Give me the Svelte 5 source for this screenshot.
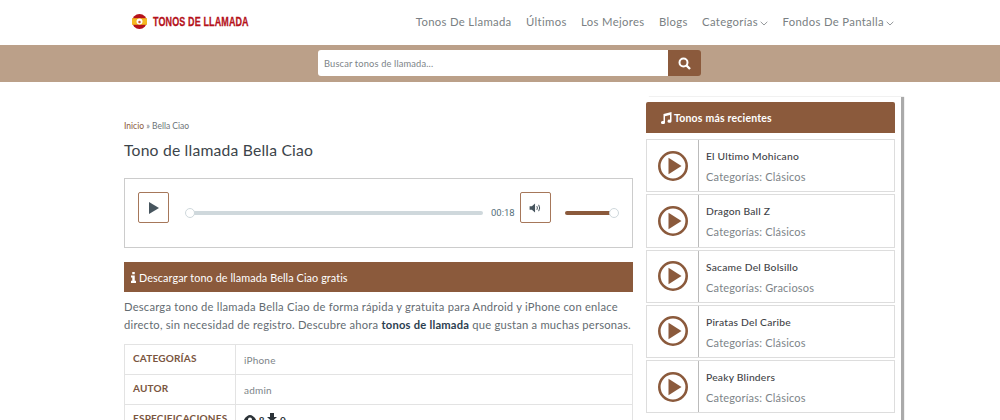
<script lang="ts">
  const links = ['Tonos De Llamada', 'Últimos', 'Los Mejores', 'Blogs'];
  const recent = [
    { title: 'El Ultimo Mohicano', cat: 'Clásicos' },
    { title: 'Dragon Ball Z', cat: 'Clásicos' },
    { title: 'Sacame Del Bolsillo', cat: 'Graciosos' },
    { title: 'Piratas Del Caribe', cat: 'Clásicos' },
    { title: 'Peaky Blinders', cat: 'Clásicos' },
  ];
</script>

<header class="nav">
  <a class="logo" href="#top">
    <svg width="15" height="15" viewBox="0 0 16 16">
      <circle cx="8" cy="8" r="8" fill="#b5121b" />
      <rect x="0" y="4.500" width="16" height="7" fill="#f5b921" />
      <circle cx="8" cy="8" r="3.200" fill="#fff" />
      <circle cx="8" cy="8.500" r="1.300" fill="#c8533a" />
    </svg>
    <span>TONOS DE LLAMADA</span>
  </a>
  <nav>
    {#each links as l}<a href="#top">{l}</a>{/each}
    <a href="#top">Categorías<svg class="caret" width="8" height="5" viewBox="0 0 8 5"><path d="M.7.8 4 4 7.3.8" fill="none" stroke="currentColor" stroke-width=".8" /></svg></a>
    <a href="#top">Fondos De Pantalla<svg class="caret" width="8" height="5" viewBox="0 0 8 5"><path d="M.7.8 4 4 7.3.8" fill="none" stroke="currentColor" stroke-width=".8" /></svg></a>
  </nav>
</header>

<div class="band">
  <form class="search">
    <input placeholder="Buscar tonos de llamada..." />
    <button type="button" aria-label="Buscar">
      <svg width="13" height="13" viewBox="0 0 13 13"><circle cx="5.500" cy="5.500" r="4" fill="none" stroke="#fff" stroke-width="2" /><path d="M8.500 8.500 12 12" stroke="#fff" stroke-width="2.400" /></svg>
    </button>
  </form>
</div>

<div class="page">
  <main>
    <p class="crumbs"><a href="#top">Inicio</a> » Bella Ciao</p>
    <h1>Tono de llamada Bella Ciao</h1>

    <div class="player">
      <button class="ctl" type="button" aria-label="Play">
        <svg width="10" height="12" viewBox="0 0 11 13"><path d="M0 0 11 6.500 0 13z" fill="#47555e" /></svg>
      </button>
      <div class="track"><i class="knob start"></i></div>
      <span class="time">00:18</span>
      <button class="ctl" type="button" aria-label="Volumen">
        <svg width="13" height="10" viewBox="0 0 13 11"><path d="M0 3.500h2.500L6 .5v10L2.500 7.500H0z" fill="#47555e" /><path d="M8 3.500q1.200 2 0 4M10 2q2.200 3.500 0 7" fill="none" stroke="#47555e" stroke-width="1.100" /></svg>
      </button>
      <div class="vol"><i class="knob end"></i></div>
    </div>

    <h2 class="bar">
      <svg width="5" height="11" viewBox="0 0 6 13"><path d="M1.500 0h3v2.600h-3zM0 4h4.500v6.500H6V13H0v-2.500h1.500V6.500H0z" fill="#fff" /></svg>
      Descargar tono de llamada Bella Ciao gratis
    </h2>

    <p class="intro">
      Descarga tono de llamada Bella Ciao de forma rápida y gratuita para Android y iPhone con enlace<br />
      directo, sin necesidad de registro. Descubre ahora <a href="#top">tonos de llamada</a> que gustan a muchas personas.
    </p>

    <table>
      <tbody>
        <tr><th>CATEGORÍAS</th><td>iPhone</td></tr>
        <tr><th>AUTOR</th><td>admin</td></tr>
        <tr>
          <th>ESPECIFICACIONES</th>
          <td class="stats">
            <svg width="12" height="9" viewBox="0 0 12 9"><path d="M0 4.500Q3 0 6 0t6 4.500Q9 9 6 9T0 4.500z" fill="#2c3338" /><circle cx="6" cy="4.500" r="2" fill="#fff" /></svg>
            8
            <svg width="10" height="11" viewBox="0 0 10 11"><path d="M3 0h4v4h3L5 8.500 0 4h3zM0 9.500h10V11H0z" fill="#2c3338" /></svg>
            0
          </td>
        </tr>
      </tbody>
    </table>
  </main>

  <aside>
    <h3 class="side-head">
      <svg width="12" height="12" viewBox="0 0 12 12"><path d="M3.500 2 11.500 0v9.200a2 1.600 0 1 1-1.500-1.500V3L5 4.200v6.300a2 1.600 0 1 1-1.500-1.500z" fill="#fff" /></svg>
      Tonos más recientes
    </h3>
    <ul>
      {#each recent as r}
        <li>
          <div class="thumb">
            <svg width="30" height="30" viewBox="0 0 30 30"><circle cx="15" cy="15" r="13.700" fill="none" stroke="#8b5a3c" stroke-width="2.600" /><path d="M10.500 6.800 23.500 15l-13 8.200z" fill="#8b5a3c" /></svg>
          </div>
          <div class="info">
            <a href="#top">{r.title}</a>
            <span>Categorías: {r.cat}</span>
          </div>
        </li>
      {/each}
    </ul>
  </aside>
</div>

<style>
  :global(body) {
    font-family: Lato, "Open Sans", sans-serif;
    color: #5f6a72;
    background: #fff;
    overflow: hidden;
    height: 420px;
  }

  a {
    color: inherit;
    text-decoration: none;
  }

  .nav {
    height: 45px;
    display: flex;
    align-items: center;
    justify-content: space-between;
    padding: 0 106px 3px 132px;
    box-sizing: border-box;
  }

  .logo {
    display: flex;
    align-items: center;
    gap: 6px;
    color: #b5121b;
    font-family: "Liberation Sans", sans-serif;
    font-weight: 700;
    font-size: 13px;
    letter-spacing: 0.2px;
  }

  .logo span {
    display: inline-block;
    transform: scaleX(0.69);
    transform-origin: left center;
    -webkit-text-stroke: 0.3px #b5121b;
  }

  nav {
    display: flex;
    gap: 14.500px;
    font-size: 11.300px;
    letter-spacing: 0.33px;
    color: #7a7f83;
  }

  .caret {
    margin-left: 2px;
  }

  .band {
    height: 37px;
    box-sizing: border-box;
    background: #bba089;
    display: flex;
    align-items: flex-start;
    padding: 5px 0 0 318px;
  }

  .search {
    display: flex;
    height: 26px;
    width: 383px;
  }

  .search input {
    flex: 1;
    min-width: 0;
    border: 0;
    padding: 0 6px;
    border-radius: 3px 0 0 3px;
    font: 9.300px Lato, sans-serif;
    letter-spacing: 0.15px;
  }

  .search input::placeholder {
    color: #7d8488;
  }

  .search button {
    width: 33px;
    border: 0;
    padding: 0;
    background: #8b5a3c;
    border-radius: 0 3px 3px 0;
    display: flex;
    align-items: center;
    justify-content: center;
  }

  .page {
    display: grid;
    grid-template-columns: 509px 255px;
    gap: 13px;
    padding: 15px 0 0 124px;
  }

  main {
    padding-top: 24px;
  }

  .crumbs {
    margin: 0;
    font-size: 8.500px;
    line-height: 10px;
    color: #6d7478;
  }

  .crumbs a {
    color: #8b5a3c;
  }

  h1 {
    margin: 9px 0 18px;
    font-size: 15.700px;
    line-height: 20px;
    font-weight: 400;
    color: #3c444a;
    letter-spacing: 0.2px;
  }

  .player {
    height: 70px;
    box-sizing: border-box;
    border: 1px solid #ccc;
    display: flex;
    align-items: flex-start;
    padding: 13px 0 0 13px;
  }

  .ctl {
    width: 31px;
    height: 31px;
    flex: none;
    padding: 0;
    background: #fff;
    border: 1px solid #a6775a;
    border-radius: 2px;
    display: flex;
    align-items: center;
    justify-content: center;
  }

  .track,
  .vol {
    position: relative;
    height: 4px;
    margin-top: 19px;
    border-radius: 2px;
  }

  .track {
    width: 293px;
    margin-left: 21px;
    background: #cfd8dc;
  }

  .vol {
    width: 49px;
    margin-left: 14px;
    background: #8b5a3c;
  }

  .knob {
    position: absolute;
    top: -3px;
    width: 8px;
    height: 8px;
    border: 1px solid #cfd8dc;
    border-radius: 50%;
    background: #fff;
  }

  .knob.start {
    left: -5px;
  }

  .knob.end {
    right: -5px;
  }

  .time {
    width: 23px;
    margin: 15px 6px 0 8px;
    font: 9.500px Roboto, sans-serif;
    line-height: 12px;
    color: #546e7a;
  }

  .bar {
    margin: 14px 0 0;
    height: 30px;
    padding-left: 7px;
    display: flex;
    align-items: center;
    gap: 3px;
    background: #8b5a3c;
    color: #fff;
    font-size: 10.800px;
    font-weight: 400;
    letter-spacing: 0.1px;
  }

  .intro {
    margin: 6px 0 0;
    font-size: 11.200px;
    line-height: 18px;
    letter-spacing: 0.22px;
    color: #646c72;
    white-space: nowrap;
  }

  .intro a {
    color: #2c3e50;
    font-weight: 700;
  }

  table {
    margin-top: 10px;
    width: 100%;
    table-layout: fixed;
    border-collapse: collapse;
    font-size: 10px;
  }

  th,
  td {
    height: 30px;
    box-sizing: border-box;
    border: 1px solid #e3e3e3;
    padding: 0 8px;
    text-align: left;
    letter-spacing: 0.2px;
  }

  th {
    width: 111px;
    padding-bottom: 3px;
    color: #7a5540;
    font-weight: 700;
  }

  td {
    color: #7d8488;
  }

  .stats {
    color: #2c3338;
    font-weight: 700;
  }

  aside {
    box-shadow: 3px 0 1px 0 #aaa;
    padding: 5px 6px 0 0;
    height: 340px;
  }

  .side-head {
    margin: 0;
    height: 31px;
    padding-left: 14px;
    display: flex;
    align-items: center;
    gap: 2px;
    background: #8b5a3c;
    border-radius: 2px 2px 0 0;
    color: #fff;
    font-size: 10.500px;
    font-weight: 700;
    letter-spacing: 0.2px;
  }

  ul {
    list-style: none;
    margin: 6px 0 0;
    padding: 0;
    display: flex;
    flex-direction: column;
    gap: 2px;
  }

  li {
    height: 53.250px;
    box-sizing: border-box;
    border: 1px solid #ddd;
    display: flex;
  }

  .thumb {
    width: 51px;
    flex: none;
    border-right: 1px solid #bbb;
    display: flex;
    align-items: center;
    justify-content: center;
  }

  .info {
    padding: 9px 7px 0;
    display: flex;
    flex-direction: column;
    gap: 7px;
    font-size: 11px;
    line-height: 14px;
    letter-spacing: 0.2px;
  }

  .info a {
    color: #3f4448;
    font-size: 10.300px;
    font-weight: 500;
  }

  .info span {
    color: #7d8488;
  }
</style>
